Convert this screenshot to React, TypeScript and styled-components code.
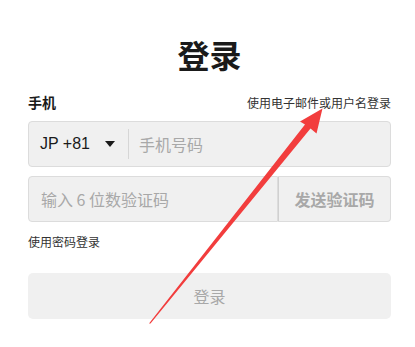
import React from "react";
import styled, { createGlobalStyle } from "styled-components";

const Global = createGlobalStyle`
  html, body { margin: 0; padding: 0; background: #fff; }
  body { font-family: "Liberation Sans", "Noto Sans CJK SC", sans-serif; }
`;

const Page = styled.div`
  position: relative;
  width: 415px;
  height: 347px;
  overflow: hidden;
`;

const Form = styled.div`
  width: 363px;
  margin-left: 28px;
  display: flex;
  flex-direction: column;
`;

const Title = styled.h1`
  margin: 34px 0 0;
  font-family: "Noto Sans CJK SC", sans-serif;
  font-size: 32px;
  line-height: 40px;
  font-weight: 700;
  color: #1a1a1a;
  text-align: center;
`;

const LabelRow = styled.div`
  margin-top: 19px;
  display: flex;
  justify-content: space-between;
  align-items: center;
  height: 18px;
`;

const Label = styled.span`
  font-family: "Noto Sans CJK SC", sans-serif;
  font-size: 14px;
  font-weight: 700;
  color: #1a1a1a;
`;

const SmallLink = styled.span`
  font-family: "Noto Sans CJK SC", sans-serif;
  font-size: 12px;
  color: #333;
`;

const Box = styled.div`
  box-sizing: border-box;
  height: 46px;
  background: #f0f0f0;
  border: 1px solid #dcdcdc;
  border-radius: 4px;
  display: flex;
  align-items: center;
`;

const PhoneBox = styled(Box)`
  margin-top: 10px;
`;

const Country = styled.div`
  display: flex;
  align-items: center;
  gap: 15px;
  padding: 0 13px 0 11px;
  font-size: 16px;
  color: #1a1a1a;
`;

const Caret = styled.span`
  width: 0;
  height: 0;
  border-left: 5px solid transparent;
  border-right: 5px solid transparent;
  border-top: 6px solid #1a1a1a;
`;

const Divider = styled.span`
  width: 1px;
  height: 30px;
  background: #d6d6d6;
`;

const Placeholder = styled.span`
  font-family: "Noto Sans CJK SC", sans-serif;
  font-size: 16px;
  color: #a8a8a8;
  padding-left: ${(p: { $pl?: number }) => p.$pl ?? 10}px;
`;

const CodeRow = styled.div`
  margin-top: 9px;
  display: flex;
`;

const CodeInput = styled(Box)`
  flex: 0 0 250px;
  border-radius: 4px 0 0 4px;
`;

const SendBtn = styled(Box)`
  flex: 1;
  border-left: 1px solid #d0d0d0;
  border-radius: 0 4px 4px 0;
  justify-content: center;
  font-family: "Noto Sans CJK SC", sans-serif;
  font-size: 16px;
  font-weight: 700;
  color: #a8a8a8;
`;

const PwdLink = styled(SmallLink)`
  margin-top: 11px;
  line-height: 18px;
`;

const LoginBtn = styled.div`
  margin-top: 22px;
  height: 46px;
  border-radius: 5px;
  background: #f0f0f0;
  display: flex;
  align-items: center;
  justify-content: center;
  font-family: "Noto Sans CJK SC", sans-serif;
  font-size: 16px;
  color: #a8a8a8;
`;

const Arrow = styled.svg`
  position: absolute;
  left: 0;
  top: 0;
  pointer-events: none;
`;

export default function App() {
  return (
    <Page>
      <Global />
      <Form>
        <Title>登录</Title>
        <LabelRow>
          <Label>手机</Label>
          <SmallLink>使用电子邮件或用户名登录</SmallLink>
        </LabelRow>
        <PhoneBox>
          <Country>
            <span>JP +81</span>
            <Caret />
          </Country>
          <Divider />
          <Placeholder>手机号码</Placeholder>
        </PhoneBox>
        <CodeRow>
          <CodeInput>
            <Placeholder $pl={12}>输入 6 位数验证码</Placeholder>
          </CodeInput>
          <SendBtn>发送验证码</SendBtn>
        </CodeRow>
        <PwdLink>使用密码登录</PwdLink>
        <LoginBtn>登录</LoginBtn>
      </Form>
      <Arrow width="415" height="347" viewBox="0 0 415 347">
        <polygon
          points="149,323.5 305,124.5 300,121.5 322.5,108.5 316.5,133.5 310.5,128.5 150.5,323.5"
          fill="#f23d3d"
        />
      </Arrow>
    </Page>
  );
}
